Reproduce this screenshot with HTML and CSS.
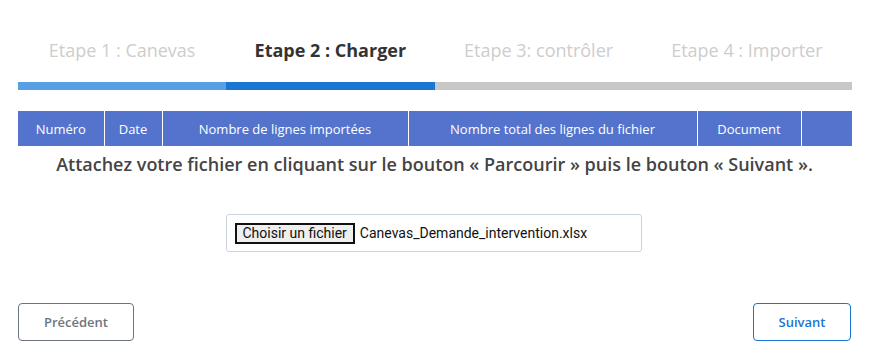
FILE: index.html
```html
<!DOCTYPE html>
<html lang="fr">
<head>
<meta charset="utf-8">
<link rel="stylesheet" href="styles.css">
</head>
<body>
<div class="page">
  <div class="steps">
    <div class="step done">Etape 1 : Canevas</div>
    <div class="step active">Etape 2 : Charger</div>
    <div class="step">Etape 3: contrôler</div>
    <div class="step">Etape 4 : Importer</div>
  </div>
  <div class="progress">
    <div class="seg seg-done"></div>
    <div class="seg seg-active"></div>
    <div class="seg seg-rest"></div>
  </div>
  <table class="grid">
    <thead>
      <tr>
        <th class="c1">Numéro</th>
        <th class="c2">Date</th>
        <th class="c3">Nombre de lignes importées</th>
        <th class="c4">Nombre total des lignes du fichier</th>
        <th class="c5">Document</th>
        <th class="c6"></th>
      </tr>
    </thead>
  </table>
  <p class="hint">Attachez votre fichier en cliquant sur le bouton « Parcourir » puis le bouton « Suivant ».</p>
  <div class="upload-row">
    <div class="upload">
      <span class="file-btn">Choisir un fichier</span>
      <span class="file-name">Canevas_Demande_intervention.xlsx</span>
    </div>
  </div>
  <div class="actions">
    <button class="btn btn-prev">Précédent</button>
    <button class="btn btn-next">Suivant</button>
  </div>
</div>
</body>
</html>
```
FILE: styles.css
```css
* { box-sizing: border-box; }
html, body { margin: 0; padding: 0; background: #fff; }
body { font-family: "Open Sans", "Noto Sans", sans-serif; }
.page { width: 869px; padding: 0 18px 0 18px; }

.steps { display: grid; grid-template-columns: repeat(4, 1fr); padding-top: 38px; height: 82px; }
.step { text-align: center; font-size: 18px; line-height: 24px; color: #cdcdcd; }
.step.active { color: #333; font-weight: 700; }

.progress { display: flex; height: 8px; width: 834px; }
.seg { height: 8px; }
.seg-done { width: 208px; background: #57a0e5; }
.seg-active { width: 209px; background: #1976d2; }
.seg-rest { flex: 1; background: #c8c8c8; }

.grid { width: 834px; margin-top: 21px; border-collapse: collapse; table-layout: fixed; }
.grid th { background: #5473cc; color: #fff; font-weight: 400; font-size: 13px; height: 35px; padding: 0; border-left: 1px solid #fff; text-align: center; }
.grid th:first-child { border-left: none; }
.c1 { width: 86px; } .c2 { width: 58px; } .c3 { width: 246px; } .c4 { width: 289px; } .c5 { width: 104px; } .c6 { width: 51px; }

.hint { margin: 6px 0 0 0; text-align: center; font-size: 18px; font-weight: 600; color: #444; line-height: 24px; }

.upload-row { display: flex; justify-content: center; margin-top: 38px; padding-right: 2px; }
.upload { width: 416px; height: 38px; border: 1px solid #ccd3e0; border-radius: 3px; display: flex; align-items: center; padding-left: 8px; font-family: Roboto, "Liberation Sans", sans-serif; font-size: 14px; color: #111; }
.file-btn { border: 2px solid #111; background: #efefef; padding: 0 6px; height: 21px; line-height: 17px; margin-right: 5px; }

.actions { display: flex; justify-content: space-between; margin-top: 51px; }
.btn { font-family: "Open Sans", "Noto Sans", sans-serif; font-weight: 600; font-size: 13px; height: 38px; background: #fff; border-radius: 4px; cursor: pointer; }
.btn-prev { width: 116px; border: 1px solid #6c757d; color: #6c757d; }
.btn-next { width: 98px; border: 1px solid #1976d2; color: #1976d2; }
```
